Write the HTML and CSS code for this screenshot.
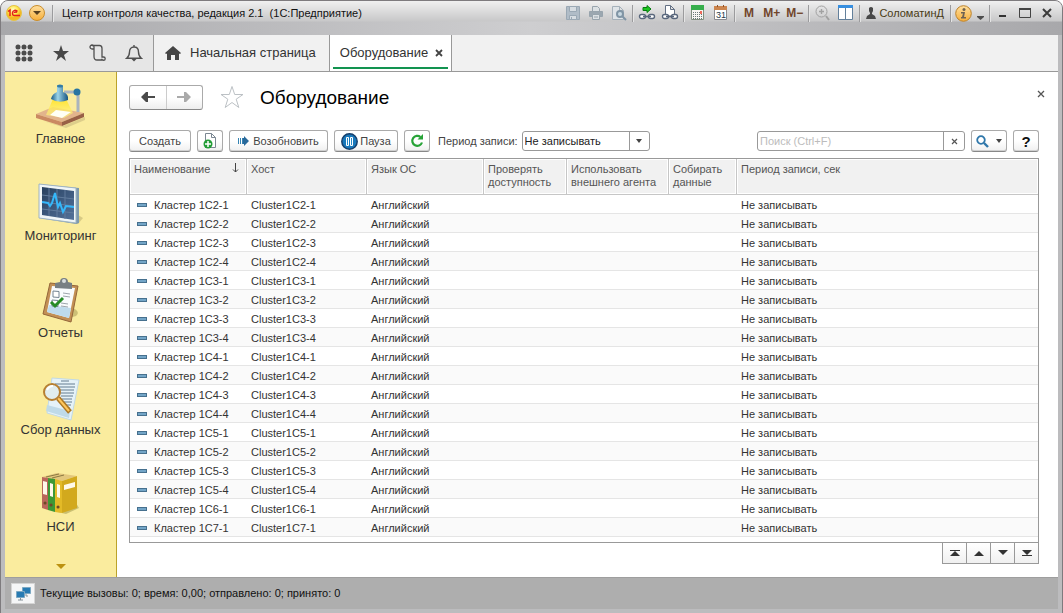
FILE: index.html
```html
<!DOCTYPE html>
<html lang="ru">
<head>
<meta charset="utf-8">
<title>Центр контроля качества, редакция 2.1 (1С:Предприятие)</title>
<link rel="stylesheet" href="styles.css">
</head>
<body>
<div class="window">
<header class="titlebar">
  <svg class="logo" width="16" height="16" viewBox="0 0 16 16"><defs><radialGradient id="gold" cx=".45" cy=".3"><stop offset="0" stop-color="#fffccf"/><stop offset=".6" stop-color="#ffe94d"/><stop offset="1" stop-color="#f4b722"/></radialGradient><linearGradient id="amber" x2="0" y2="1"><stop stop-color="#ffe0a0"/><stop offset="1" stop-color="#f6ae3a"/></linearGradient></defs><circle cx="8" cy="8" r="7.5" fill="url(#gold)" stroke="#e5c247"/><path d="M2 6.500l2-1.500v6M11.500 6.500C10 4.500 6.500 5 6.500 8S8 10.500 9 10.500h5M11 7.500c-1-1-2.500-.5-2.500.5" fill="none" stroke="#e3201b" stroke-width="1.500"/></svg>
  <button class="plain menu" aria-label="Главное меню"><svg width="16" height="16" viewBox="0 0 16 16"><circle cx="8" cy="8" r="7.500" fill="url(#amber)" stroke="#c98d2c"/><path d="M4 6h8l-4 4z" fill="#574020"/></svg></button>
  <i class="divider"></i>
  <h1>Центр контроля качества, редакция 2.1&nbsp; (1С:Предприятие)</h1>
  <nav class="system">
    <button class="plain tool" aria-label="Сохранить"><svg width="16" height="16" viewBox="0 0 16 16" fill="none" stroke="#9aa8b4"><path d="M1.500 1.500h13v13h-13z" fill="#b0bcc7"/><path d="M4.500 1.500h7v5h-7zM4.500 10.500h7v4h-7z" fill="#d7dde2"/><path d="M6.500 12v2"/></svg></button>
    <button class="plain tool" aria-label="Печать"><svg width="16" height="16" viewBox="0 0 16 16" fill="#dce1e4" stroke="#98a4ad"><path d="M4.500 6V1.500h5l2 2V6"/><path d="M1.500 6.500h13v5h-13z" fill="#9ba7b0"/><path d="M4.500 9.500h7v5h-7zM6 12h4"/></svg></button>
    <button class="plain tool" aria-label="Просмотр"><svg width="16" height="16" viewBox="0 0 16 16" fill="#dfe4e8" stroke="#a5b1ba"><path d="M1.500 1.500h7l4 4v9h-11zM8.500 1.500v4h4"/><circle cx="9" cy="9" r="3" fill="#c9d9e3" stroke="#8095a5" stroke-width="2"/><path d="M11 11l4 4" stroke="#8095a5" stroke-width="2"/></svg></button>
    <i class="divider"></i>
    <button class="plain tool" aria-label="Перейти по ссылке"><svg width="18" height="16" viewBox="0 0 18 16"><path d="M5 2.500h4V.5L13 4 9 7.500v-2H5z" fill="#1cc51f" stroke="#087b12"/><rect x="1.500" y="9.500" width="6" height="4" rx="2" fill="#fff" stroke="#59677c" stroke-width="1.400"/><rect x="10.500" y="9.500" width="6" height="4" rx="2" fill="#fff" stroke="#59677c" stroke-width="1.400"/><path d="M5 11.500h8" stroke="#59677c" stroke-width="1.600"/></svg></button>
    <button class="plain tool" aria-label="Получить ссылку"><svg width="18" height="16" viewBox="0 0 18 16"><path d="M4.500 10V.5h5l4 4V10M9.500.5v4h4" fill="#fff" stroke="#637084"/><rect x="1.500" y="9.500" width="6" height="4" rx="2" fill="#fff" stroke="#59677c" stroke-width="1.400"/><rect x="10.500" y="9.500" width="6" height="4" rx="2" fill="#fff" stroke="#59677c" stroke-width="1.400"/><path d="M5 11.500h8" stroke="#59677c" stroke-width="1.600"/></svg></button>
    <i class="divider"></i>
    <button class="plain tool" aria-label="Калькулятор"><svg width="14" height="16" viewBox="0 0 14 16"><path d="M.5.5h12v14H.5z" fill="#f7f7f3" stroke="#819080"/><path d="M0 0h13v5H0z" fill="#37ae4c"/><path d="M2 7.500h7M2 9.500h9M2 11.500h9M2 13.500h9" stroke="#6a7a78" stroke-dasharray="1 1"/><path d="M9 6h2v3H9z" fill="#ed6b5c"/></svg></button>
    <button class="plain tool calendar" aria-label="Календарь"><svg width="14" height="16" viewBox="0 0 14 16"><path d="M.5 1.500h12v13H.5z" fill="#fff" stroke="#8b8b90"/><path d="M0 1h13v4H0z" fill="#cc854e"/><path d="M3.500 0v2M9.500 0v2" stroke="#8f5128"/><text x="2" y="13">31</text></svg></button>
    <i class="divider"></i>
    <button class="plain memory">M</button><button class="plain memory">M+</button><button class="plain memory">M−</button>
    <i class="divider"></i>
    <button class="plain tool" aria-label="Масштаб"><svg width="15" height="16" viewBox="0 0 15 16" fill="none" stroke="#a1a1a1"><circle cx="6.500" cy="6.500" r="5.500"/><path d="M4 6.500h5M6.500 4v5" stroke-width="1.400"/><path d="M11 11l3 4" stroke-width="2"/></svg></button>
    <button class="plain tool" aria-label="Панели"><svg width="16" height="16" viewBox="0 0 16 16"><path d="M.5 1.500h14v13H.5z" fill="#fff" stroke="#63809b"/><path d="M0 0h15v3H0z" fill="#378fe0"/><path d="M7.500 3v11" stroke="#63809b"/></svg></button>
    <i class="divider"></i>
    <button class="plain user"><svg width="10" height="12" viewBox="0 0 10 12"><path d="M3 1q2-2 4 0v3L6 6v1l3 2 1 3H0l1-3 3-2V6L3 4z" fill="#484848"/></svg>СоломатинД</button>
    <i class="divider"></i>
    <button class="plain info" aria-label="Справка"><svg width="17" height="17" viewBox="0 0 17 17"><circle cx="8.500" cy="8.500" r="7.800" fill="url(#amber)" stroke="#bc822b"/><circle cx="9" cy="4.500" r="1.500" fill="#6f6252"/><path d="M6 7h4l-1 5h2v1.500H6V12h1l1-3.500H6z" fill="#6f6252"/></svg><svg width="9" height="16" viewBox="0 0 9 16"><path d="M1 11h7v1L4.500 15 1 12z" fill="#4e4e4e"/></svg></button>
    <i class="divider"></i>
    <button class="plain win" aria-label="Свернуть"><svg width="12" height="12" viewBox="0 0 12 12"><path d="M2 9h7" stroke="#333" stroke-width="2"/></svg></button>
    <button class="plain win" aria-label="Развернуть"><svg width="12" height="12" viewBox="0 0 12 12"><path d="M.5 2v8.500h11V2z" fill="none" stroke="#444"/><path d="M0 2h12" stroke="#444" stroke-width="2"/></svg></button>
    <button class="plain win" aria-label="Закрыть"><svg width="12" height="12" viewBox="0 0 12 12"><path d="M2 2l8 8M10 2l-8 8" stroke="#3c3c3c" stroke-width="2"/></svg></button>
  </nav>
</header>
<div class="tabs">
  <div class="launch">
    <button class="plain" aria-label="Все функции"><svg width="18" height="18" viewBox="0 0 18 18" fill="none" stroke="#4b4b4b" stroke-width="5" stroke-linecap="round"><path d="M3 3h.01M9 3h.01M15 3h.01M3 9h.01M9 9h.01M15 9h.01M3 15h.01M9 15h.01M15 15h.01"/></svg></button>
    <button class="plain" aria-label="Избранное"><svg width="18" height="18" viewBox="0 0 18 18"><path d="M9 1l2 6h6l-5 4 2 6-5-4-5 4 2-6-5-4h6z" fill="#484848"/></svg></button>
    <button class="plain" aria-label="История"><svg width="18" height="18" viewBox="0 0 18 18" fill="none" stroke="#505050" stroke-width="1.300"><path d="M4.500 5H3a2 2 0 1 1 2-2v9.500q0 3.500 3 3.500h6.500M3 1.500h7.500q2.500 0 2.500 3V13h1.500a1.700 1.700 0 1 1-1.700 1.700"/></svg></button>
    <button class="plain" aria-label="Оповещения"><svg width="18" height="18" viewBox="0 0 18 18" fill="none" stroke="#505050" stroke-width="1.400"><path d="M1.700 14.300h14.600q-2.800-2.300-2.800-6.300c0-3-1.500-5-4.500-5S4.500 5 4.500 8q0 4-2.800 6.300zM9 3V1"/><path d="M6.500 15h5L9 17.500z" fill="#505050" stroke="none"/></svg></button>
  </div>
  <a class="tab" href="#home"><svg width="16" height="14" viewBox="0 0 16 14"><path d="M8 0l8 7-1 1-1-.500V14h-4V9H6v5H2V7.500L1 8 0 7z" fill="#454545"/></svg>Начальная страница</a>
  <div class="tab active"><a href="#equipment">Оборудование</a><button class="plain" aria-label="Закрыть вкладку"><svg width="8" height="8" viewBox="0 0 8 8"><path d="M1 1l6 6M7 1L1 7" stroke="#444" stroke-width="1.800"/></svg></button></div>
</div>
<div class="body">
  <nav class="sidebar">
    <a class="section" href="#main"><svg width="52" height="46" viewBox="0 0 52 46"><defs><linearGradient id="beam" x2="0" y2="1"><stop stop-color="#ffe22e"/><stop offset="1" stop-color="#fff68a" stop-opacity=".6"/></linearGradient><linearGradient id="steel"><stop stop-color="#155987"/><stop offset=".4" stop-color="#9ed5e8"/><stop offset="1" stop-color="#135180"/></linearGradient></defs><path d="M8 37l20 5 22-9v3l-19 8z" fill="#c9ba7e" opacity=".6"/><path d="M1 30l17-7 31 6-22 9z" fill="#e2b48c"/><path d="M1 30v4l26 8v-4z" fill="#ca8962"/><path d="M27 38v4l22-9v-4z" fill="#986046"/><path d="M18 15L11 31l18 3 9-5-7-14z" fill="url(#beam)"/><path d="M21 26l15 2-9 6-12-3z" fill="#fffff5"/><path d="M29 8h14v20" fill="none" stroke="#aab4be" stroke-width="3"/><circle cx="42" cy="8" r="3.500" fill="#2874a1"/><path d="M22 2h6v6q6 2 5 8-9 4-17-1 1-5 6-7z" fill="url(#steel)"/><ellipse cx="25" cy="2" rx="3" ry="1.500" fill="#347ca5"/></svg><span>Главное</span></a>
    <a class="section" href="#monitoring"><svg width="52" height="46" viewBox="0 0 52 46"><defs><linearGradient id="navy" x2="1" y2="1"><stop stop-color="#27405f"/><stop offset="1" stop-color="#53719a"/></linearGradient></defs><path d="M14 38l29 5 5-6-5-3z" fill="#bcae70" opacity=".55"/><path d="M4 3l40 4v35l-3 1-37-6z" fill="#7e9aaf"/><path d="M4 3l37 4v35L4 37z" fill="#eff5f8" stroke="#9fb4c2"/><path d="M7 6l32 4v29L7 34z" fill="url(#navy)"/><path d="M7 14l32 4M7 21l32 4M7 28l32 4M14 7v28M22 8v28M30 9v29" stroke="#607b9c"/><path d="M7 21l6 1 2 3 2-3 3-10 3 14 2-4 3 9 3-6 8 1" fill="none" stroke="#35b7fa" stroke-width="2"/></svg><span>Мониторинг</span></a>
    <a class="section" href="#reports"><svg width="52" height="46" viewBox="0 2 52 46"><path d="M27 44l14-4q5-4-3-8z" fill="#b9ac65" opacity=".7"/><path d="M15 7l28 3-7 36-28-8z" fill="#c39055" stroke="#94663a"/><path d="M17 10l23 2-6 30-22-6z" fill="#f8fbfd"/><path d="M14 29l22 3-2 10-22-6z" fill="#bedbed"/><path d="M20 12V7l5-1q0-4 4-4t4 4l4 1v6z" fill="#777f83"/><circle cx="29" cy="5" r="2" fill="#d9dede"/><path d="M18 15l6 .5v6l-6-.5zM17 24l6 .5v6l-6-.5z" fill="#fff" stroke="#758492"/><path d="M28 17l7 1M28 20l7 1M26 27l7 1M26 30l7 1" stroke="#9da5ad"/><path d="M16 26l4 4 8-8" fill="none" stroke="#258b26" stroke-width="3"/></svg><span>Отчеты</span></a>
    <a class="section" href="#collection"><svg width="52" height="46" viewBox="0 1 52 46"><path d="M17 4l27 2-8 40-24-7z" fill="#e5f2f8" stroke="#c2dae5"/><path d="M12 31l23 6-1 7-23-7z" fill="#bfdae8"/><path d="M26 7h8M20 10h20M21 13h19M21 16h18M25 19h14M26 22h12M27 25h10M28 28h9M29 31h7M30 34h5" stroke="#657c90"/><path d="M23 24l12 14" stroke="#ad7824" stroke-width="5"/><path d="M23 24l11 13" stroke="#ffc75c" stroke-width="2"/><circle cx="17" cy="18" r="8" fill="#e1edee" stroke="#b78032" stroke-width="2"/><path d="M12 16q2-4 6-4" stroke="#fff" stroke-width="2" fill="none"/></svg><span>Сбор данных</span></a>
    <a class="section" href="#reference"><svg width="52" height="46" viewBox="0 4 52 46"><path d="M18 43l13 3 13-6-3-5z" fill="#aaa154" opacity=".6"/><path d="M7 9l15-4 20 3-15 5z" fill="#e3c77d"/><path d="M11 9l13-3M17 10l12-3" stroke="#8b7942"/><path d="M7 9l6 1v32l-6-2z" fill="#b9675a"/><path d="M13 10l7 1v33l-7-2z" fill="#3d9835"/><path d="M20 11l7 2v32l-7-1z" fill="#e3ba27"/><path d="M27 13l15-5v32l-15 5z" fill="#d2a91d"/><path d="M8 13l4 1v13l-4-1zM15 15l3 1v13l-3-1zM22 16l3 1v13l-3-1zM29 17l11-3v5l-11 3z" fill="#fff9e9"/><path d="M10 35h.1M16 37h.1M23 39h.1" stroke="#6d4926" stroke-width="3" stroke-linecap="round"/></svg><span>НСИ</span></a>
    <button class="plain more" aria-label="Другие разделы"><svg width="10" height="6" viewBox="0 0 10 6"><path d="M0 0h10L5 5z" fill="#bc9211"/></svg></button>
  </nav>
  <main>
    <div class="heading">
      <div class="history"><button aria-label="Назад"><svg width="16" height="12" viewBox="0 0 16 12"><path d="M6 1L1 6l5 5h2V7h7V5H8V1z" fill="#4a4a4a"/></svg></button><button aria-label="Вперед"><svg width="16" height="12" viewBox="0 0 16 12"><path d="M10 1l5 5-5 5H8V7H1V5h7V1z" fill="#aaa"/></svg></button></div>
      <button class="plain favorite" aria-label="В избранное"><svg width="24" height="24" viewBox="0 0 24 24"><path d="M12 1.500l2.700 8H23l-6.800 4.700 2.600 8.300-6.800-5-6.800 5 2.600-8.300L1 9.500h8.300z" fill="#fff" stroke="#bcc1c5"/></svg></button>
      <h2>Оборудование</h2>
      <button class="plain close" aria-label="Закрыть"><svg width="8" height="8" viewBox="0 0 8 8"><path d="M1 1l6 6M7 1L1 7" stroke="#555" stroke-width="1.300"/></svg></button>
    </div>
    <div class="toolbar">
      <button class="button create">Создать</button>
      <button class="button icon" aria-label="Скопировать"><svg width="14" height="16" viewBox="0 0 14 16"><path d="M2.500.5h6l4 4v10h-10zM8.500.5v4h4" fill="#fff" stroke="#7b8792"/><circle cx="5" cy="11" r="4.500" fill="#229d36"/><path d="M2 11h6M5 8v6" stroke="#fff" stroke-width="1.500"/></svg></button>
      <button class="button resume"><svg width="11" height="10" viewBox="0 0 11 10"><path d="M.5 2v6M2.500 2v6M4.500 2v6" stroke="#3684b3"/><path d="M5 2h1V0l5 5-5 5V8H5z" fill="#28699b"/></svg>Возобновить</button>
      <button class="button pause"><svg width="17" height="17" viewBox="0 0 17 17"><circle cx="8.500" cy="8.500" r="7.700" fill="#1978bb" stroke="#153f6c" stroke-width="1.500"/><path d="M5.500 4.500h2v8h-2zM9.500 4.500h2v8h-2z" fill="#288cc9" stroke="#fff"/></svg>Пауза</button>
      <button class="button icon" aria-label="Обновить"><svg width="14" height="14" viewBox="0 0 14 14"><path d="M10.500 3A5 5 0 1 0 12 8.500" fill="none" stroke="#27a337" stroke-width="2.200"/><path d="M7.500 5.500H13V0z" fill="#27a337"/></svg></button>
      <label class="period-label" for="period">Период записи:</label>
      <div class="select"><select id="period"><option>Не записывать</option></select><span><svg width="6" height="4" viewBox="0 0 6 4"><path d="M0 0h6L3 4z" fill="#444"/></svg></span></div>
      <div class="search"><input type="search" aria-label="Поиск" placeholder="Поиск (Ctrl+F)"><button class="plain" aria-label="Очистить"><svg width="7" height="7" viewBox="0 0 7 7"><path d="M1 1l5 5M6 1L1 6" stroke="#555" stroke-width="1.200"/></svg></button></div>
      <button class="button find" aria-label="Найти"><svg width="13" height="13" viewBox="0 0 13 13" fill="none" stroke="#2f77aa"><circle cx="5" cy="5" r="3.800" stroke-width="1.800"/><path d="M8 8l4 4" stroke-width="2.400"/></svg><svg width="6" height="4" viewBox="0 0 6 4"><path d="M0 0h6L3 4z" fill="#444"/></svg></button>
      <button class="button help" aria-label="Помощь">?</button>
    </div>
    <div class="grid">
      <table>
        <colgroup><col class="c-name"><col class="c-host"><col class="c-lang"><col class="c-check"><col class="c-agent"><col class="c-data"><col></colgroup>
        <thead><tr><th><div class="sort">Наименование<svg width="7" height="10" viewBox="0 0 7 10"><path d="M3.500 0v9M1 6.500L3.500 9 6 6.500" fill="none" stroke="#444"/></svg></div></th><th>Хост</th><th>Язык ОС</th><th>Проверять доступность</th><th>Использовать внешнего агента</th><th>Собирать данные</th><th>Период записи, сек</th></tr></thead>
        <tbody>
        <tr><td><i class="mark"></i>Кластер 1С2-1</td><td>Cluster1C2-1</td><td>Английский</td><td></td><td></td><td></td><td>Не записывать</td></tr>
        <tr><td><i class="mark"></i>Кластер 1С2-2</td><td>Cluster1C2-2</td><td>Английский</td><td></td><td></td><td></td><td>Не записывать</td></tr>
        <tr><td><i class="mark"></i>Кластер 1С2-3</td><td>Cluster1C2-3</td><td>Английский</td><td></td><td></td><td></td><td>Не записывать</td></tr>
        <tr><td><i class="mark"></i>Кластер 1С2-4</td><td>Cluster1C2-4</td><td>Английский</td><td></td><td></td><td></td><td>Не записывать</td></tr>
        <tr><td><i class="mark"></i>Кластер 1С3-1</td><td>Cluster1C3-1</td><td>Английский</td><td></td><td></td><td></td><td>Не записывать</td></tr>
        <tr><td><i class="mark"></i>Кластер 1С3-2</td><td>Cluster1C3-2</td><td>Английский</td><td></td><td></td><td></td><td>Не записывать</td></tr>
        <tr><td><i class="mark"></i>Кластер 1С3-3</td><td>Cluster1C3-3</td><td>Английский</td><td></td><td></td><td></td><td>Не записывать</td></tr>
        <tr><td><i class="mark"></i>Кластер 1С3-4</td><td>Cluster1C3-4</td><td>Английский</td><td></td><td></td><td></td><td>Не записывать</td></tr>
        <tr><td><i class="mark"></i>Кластер 1С4-1</td><td>Cluster1C4-1</td><td>Английский</td><td></td><td></td><td></td><td>Не записывать</td></tr>
        <tr><td><i class="mark"></i>Кластер 1С4-2</td><td>Cluster1C4-2</td><td>Английский</td><td></td><td></td><td></td><td>Не записывать</td></tr>
        <tr><td><i class="mark"></i>Кластер 1С4-3</td><td>Cluster1C4-3</td><td>Английский</td><td></td><td></td><td></td><td>Не записывать</td></tr>
        <tr><td><i class="mark"></i>Кластер 1С4-4</td><td>Cluster1C4-4</td><td>Английский</td><td></td><td></td><td></td><td>Не записывать</td></tr>
        <tr><td><i class="mark"></i>Кластер 1С5-1</td><td>Cluster1C5-1</td><td>Английский</td><td></td><td></td><td></td><td>Не записывать</td></tr>
        <tr><td><i class="mark"></i>Кластер 1С5-2</td><td>Cluster1C5-2</td><td>Английский</td><td></td><td></td><td></td><td>Не записывать</td></tr>
        <tr><td><i class="mark"></i>Кластер 1С5-3</td><td>Cluster1C5-3</td><td>Английский</td><td></td><td></td><td></td><td>Не записывать</td></tr>
        <tr><td><i class="mark"></i>Кластер 1С5-4</td><td>Cluster1C5-4</td><td>Английский</td><td></td><td></td><td></td><td>Не записывать</td></tr>
        <tr><td><i class="mark"></i>Кластер 1С6-1</td><td>Cluster1C6-1</td><td>Английский</td><td></td><td></td><td></td><td>Не записывать</td></tr>
        <tr><td><i class="mark"></i>Кластер 1С7-1</td><td>Cluster1C7-1</td><td>Английский</td><td></td><td></td><td></td><td>Не записывать</td></tr>
        </tbody>
      </table>
    </div>
    <div class="pager">
      <button aria-label="В начало"><svg width="10" height="6" viewBox="0 0 10 6"><path d="M0 .5h10" stroke="#333"/><path d="M0 6l5-5 5 5z" fill="#333"/></svg></button><button aria-label="Вверх"><svg width="10" height="6" viewBox="0 0 10 6"><path d="M0 6l5-5 5 5z" fill="#333"/></svg></button><button aria-label="Вниз"><svg width="10" height="6" viewBox="0 0 10 6"><path d="M0 0h10L5 5z" fill="#333"/></svg></button><button aria-label="В конец"><svg width="10" height="6" viewBox="0 0 10 6"><path d="M0 0h10L5 5zM0 5h10v1H0z" fill="#333"/></svg></button>
    </div>
  </main>
</div>
<footer><span class="network"><svg width="15" height="14" viewBox="0 0 15 14"><path d="M6.500.5h8v6h-8z" fill="#287bb3" stroke="#7ba8c3"/><path d="M10 7v2h2" stroke="#849097" fill="none"/><path d="M.5 4.500h8v6h-8z" fill="#287bb3" stroke="#7ba8c3"/><path d="M4.500 11v2M2 13h5" stroke="#849097"/></svg></span>Текущие вызовы: 0; время: 0,00; отправлено: 0; принято: 0</footer>
</div>
</body>
</html>
```
FILE: styles.css
```css
* { box-sizing: border-box; }
body { margin: 0; background: #fff; color: #333; font: 11px/13px "Liberation Sans", Arial, sans-serif; }
button, input, select { font: inherit; color: inherit; margin: 0; }
button { display: flex; align-items: center; justify-content: center; padding: 0; }
a { color: inherit; text-decoration: none; }
svg { display: block; flex: none; }
h1, h2 { margin: 0; font-weight: normal; }
.plain { border: 0; background: transparent; }
.window { display: flex; flex-direction: column; min-height: 100vh; padding: 0 4px 4px; background: #bcbcbe; border: 1px solid #7e7b7e; border-radius: 8px 8px 0 0; }
.titlebar { display: flex; align-items: center; height: 34px; margin: 0 -4px; padding: 0 4px 10px 5px; border-radius: 7px 7px 0 0; background: linear-gradient(#f0f0f0, #c8c8c9 20px, transparent 21px), linear-gradient(90deg, #a8a8ab, #ceced0 50%, #a8a8ab); }
.titlebar h1 { color: #111; font-size: 11px; line-height: 16px; white-space: nowrap; }
.menu { margin: 0 7px; }
.divider { flex: none; width: 1px; height: 17px; background: #9b9b9d; box-shadow: 1px 0 #e5e5e5; }
.titlebar > .divider { margin-right: 9px; }
.system { display: flex; align-items: center; margin-left: auto; }
.tool { width: 23px; height: 18px; }
.system .divider { margin: 0 2px; }
.calendar text { fill: #26394a; font-size: 9px; }
.memory { width: 23px; color: #71452b; font-size: 12px; font-weight: bold; }
.user { gap: 3px; padding: 0 4px; color: #483a13; }
.info { gap: 4px; padding: 0 2px; }
.win { width: 22px; height: 16px; }
.tabs { display: flex; height: 37px; border-bottom: 1px solid #999; background: #f1f1f1; }
.launch { display: flex; padding-right: 2px; background: #e6e6e6; border-right: 1px solid #999; }
.launch button { width: 37px; }
.launch button:last-child { width: 35px; }
.tab { display: flex; align-items: center; gap: 9px; padding: 0 13px 0 11px; border-right: 1px solid #999; font-size: 13px; line-height: 16px; white-space: nowrap; }
.active { gap: 7px; padding: 0 8px 0 10px; background: linear-gradient(#129350, #129350) 3px 32px / calc(100% - 6px) 2px no-repeat #fff; }
.body { display: flex; flex: 1; background: #fff; }
.sidebar { display: flex; flex-direction: column; width: 112px; flex: none; background: #faec9e; border-right: 1px solid #bba32b; }
.section { display: flex; flex-direction: column; align-items: center; height: 97px; padding-top: 12px; font-size: 13px; line-height: 16px; }
.section span { margin-top: 1px; }
.more { height: 20px; margin-top: auto; }
main { flex: 1; min-width: 0; display: flex; flex-direction: column; padding: 12px 19px 13px 12px; }
.heading { display: flex; align-items: center; height: 26px; }
.history { display: flex; width: 74px; height: 25px; border: 1px solid #aaa; border-bottom-color: #888; border-radius: 3px; background: linear-gradient(#fff 50%, #eee); }
.history button { flex: 1; border: 0; background: transparent; }
.history button + button { border-left: 1px solid #ccc; }
.favorite { margin: 0 16px 0 17px; }
.heading h2 { padding-top: 2px; color: #000; font-size: 19px; line-height: 24px; }
.close { align-self: flex-start; width: 16px; height: 20px; margin: 0 -10px 0 auto; }
.toolbar { display: flex; align-items: center; gap: 6px; margin: 20px 0 6px; height: 22px; }
.button { height: 22px; flex: none; border: 1px solid #aaa; border-bottom-color: #888; border-radius: 3px; box-shadow: inset 0 -1px #d0d0d0; background: linear-gradient(#fff 50%, #f0f0f0); color: #444; }
.create { width: 62px; }
.icon { width: 26px; }
.resume { width: 99px; gap: 4px; }
.pause { width: 64px; gap: 2px; }
.period-label { margin-left: 2px; color: #444; white-space: nowrap; }
.select { display: grid; grid-template-columns: 1fr 20px; width: 128px; height: 20px; margin-left: -2px; border: 1px solid #999; border-radius: 3px; }
.select select { grid-area: 1 / 1 / 2 / 3; width: 100%; padding: 0 2px; border: 0; background: transparent; appearance: none; color: #222; }
.select span { grid-area: 1 / 2; display: flex; align-items: center; justify-content: center; border-left: 1px solid #999; pointer-events: none; }
.search { display: flex; width: 208px; height: 20px; margin-left: auto; border: 1px solid #999; border-radius: 3px; }
.search input { flex: 1; min-width: 0; padding: 0 2px; border: 0; background: transparent; appearance: none; }
.search input::placeholder { color: #bcbcbc; }
.search button { width: 21px; border-left: 1px solid #999; }
.find { width: 36px; gap: 7px; }
.help { width: 26px; color: #111; font-size: 15px; font-weight: bold; }
.grid { flex: 1; border: 1px solid #999; }
table { width: 100%; table-layout: fixed; border-collapse: separate; border-spacing: 0; }
.c-name { width: 117px; }
.c-host { width: 120px; }
.c-lang { width: 117px; }
.c-check { width: 83px; }
.c-agent { width: 102px; }
.c-data { width: 68px; }
th { height: 36px; padding: 4px 2px 4px 4px; border-right: 1px solid #c6c6c6; border-bottom: 1px solid #c6c6c6; background: #f1f1f1; box-shadow: inset 0 0 0 1px #fff; color: #555; font-weight: normal; text-align: left; vertical-align: top; }
th:last-child { border-right: 0; }
.sort { display: flex; justify-content: space-between; padding-right: 5px; }
td { height: 19px; padding: 3px 4px 0; border-bottom: 1px solid #e5e5e5; white-space: nowrap; }
tbody tr:nth-child(even) { background: #fafafa; }
.mark { display: inline-block; width: 10px; height: 4px; margin: 0 7px 2px 3px; border: 1px solid #46708e; background: #73a5c7; }
.pager { display: flex; align-self: flex-end; border: 1px solid #999; border-top: 0; }
.pager button { width: 24px; height: 20px; border: 0; border-left: 1px solid #999; background: linear-gradient(#fff, #f0f0f0); }
.pager button:first-child { width: 23px; border-left: 0; }
footer { display: flex; align-items: center; gap: 5px; height: 32px; padding-left: 6px; background: #aeaeae; border-top: 1px solid #9e9e9e; color: #111; }
.network { display: flex; align-items: center; justify-content: center; width: 24px; height: 21px; background: #f5f6f7; border: 1px solid #d5d5d5; }
```
